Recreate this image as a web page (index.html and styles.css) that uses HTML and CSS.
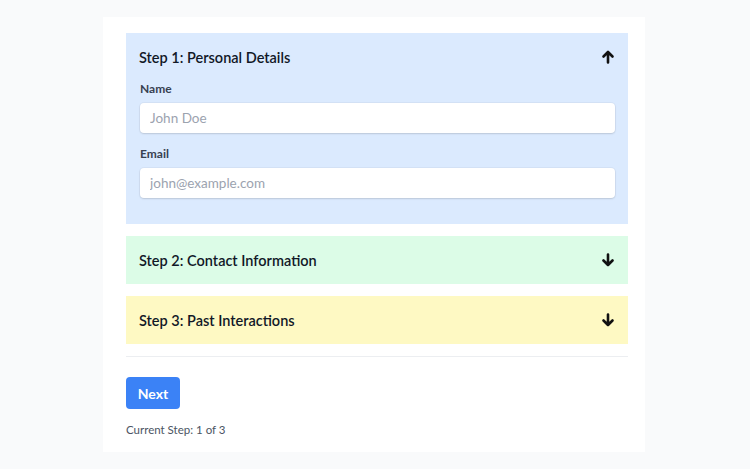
FILE: index.html
```html
<!DOCTYPE html>
<html lang="en">
<head>
<meta charset="utf-8">
<title>Steps</title>
<link rel="stylesheet" href="styles.css">
</head>
<body>
<div class="card">
  <section class="panel panel-blue">
    <div class="panel-head">
      <span class="panel-title">Step 1: Personal Details</span>
      <svg class="arrow" viewBox="0 0 14 14" width="14" height="14"><path d="M7 12.5V2M2.5 6.5L7 2l4.5 4.5" fill="none" stroke="#111" stroke-width="2.6" stroke-linecap="round" stroke-linejoin="round"/></svg>
    </div>
    <div class="panel-body">
      <div class="field">
        <label class="label">Name</label>
        <input class="input" type="text" placeholder="John Doe">
      </div>
      <div class="field">
        <label class="label">Email</label>
        <input class="input" type="text" placeholder="john@example.com">
      </div>
    </div>
  </section>
  <section class="panel panel-green">
    <div class="panel-head">
      <span class="panel-title">Step 2: Contact Information</span>
      <svg class="arrow" viewBox="0 0 14 14" width="14" height="14"><path d="M7 1.5V12M2.5 7.5L7 12l4.5-4.5" fill="none" stroke="#111" stroke-width="2.6" stroke-linecap="round" stroke-linejoin="round"/></svg>
    </div>
  </section>
  <section class="panel panel-yellow">
    <div class="panel-head">
      <span class="panel-title">Step 3: Past Interactions</span>
      <svg class="arrow" viewBox="0 0 14 14" width="14" height="14"><path d="M7 1.5V12M2.5 7.5L7 12l4.5-4.5" fill="none" stroke="#111" stroke-width="2.6" stroke-linecap="round" stroke-linejoin="round"/></svg>
    </div>
  </section>
  <div class="footer">
    <button class="btn" type="button">Next</button>
    <p class="status">Current Step: 1 of 3</p>
  </div>
</div>
</body>
</html>
```
FILE: styles.css
```css
html, body {
  margin: 0;
  padding: 0;
}
body {
  background: #f9fafb;
  font-family: Lato, "Open Sans", sans-serif;
  color: #1f2937;
  padding-top: 17px;
}
.card {
  width: 542px;
  margin-left: 103px;
  background: #ffffff;
  box-sizing: border-box;
  padding: 16px 17px 14px 23px;
  display: flex;
  flex-direction: column;
  gap: 12px;
}
.panel-blue { background: #dbeafe; }
.panel-green { background: #dcfce7; }
.panel-yellow { background: #fef9c3; }
.panel-head {
  height: 48px;
  display: flex;
  align-items: center;
  justify-content: space-between;
  padding: 0 13px 0 13px;
}
.panel-title {
  font-size: 14.5px;
  font-weight: 600;
  color: #111827;
}
.arrow {
  display: block;
}
.panel-body {
  padding: 0 13px 26px 14px;
  display: flex;
  flex-direction: column;
  gap: 13px;
}
.field {
  display: flex;
  flex-direction: column;
  gap: 6px;
}
.label {
  font-size: 12px;
  font-weight: 700;
  line-height: 16px;
  color: #374151;
}
.input {
  height: 30px;
  box-sizing: border-box;
  border: none;
  border-radius: 4px;
  background: #fff;
  box-shadow: 0 1px 2px rgba(0,0,0,0.12), 0 0 0 1px rgba(0,0,0,0.03);
  padding: 0 10px;
  font-family: inherit;
  font-size: 13.5px;
  color: #374151;
  outline: none;
}
.input::placeholder {
  color: #9ca3af;
}
.footer {
  border-top: 1px solid #eceef1;
  padding-top: 20px;
  display: flex;
  flex-direction: column;
  align-items: flex-start;
}
.btn {
  width: 54px;
  height: 32px;
  border: none;
  border-radius: 4px;
  background: #3b82f6;
  color: #fff;
  font-family: inherit;
  font-size: 14px;
  font-weight: 700;
  padding: 0;
  cursor: pointer;
}
.status {
  margin: 13px 0 0 0;
  font-size: 11.5px;
  line-height: 16px;
  color: #4b5563;
}
```
